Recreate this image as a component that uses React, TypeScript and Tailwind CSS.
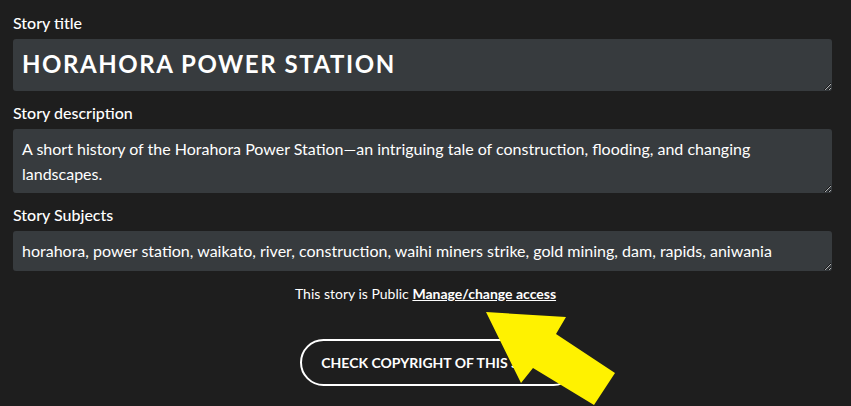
function Field({
  label,
  value,
  className,
}: {
  label: string;
  value: string;
  className: string;
}) {
  return (
    <div className="flex flex-col gap-[4px]">
      <label className="text-white text-[16px] leading-6 font-medium">{label}</label>
      <textarea
        readOnly
        defaultValue={value}
        className={`w-full bg-[#373b3e] text-white rounded-[3px] outline-none ${className}`}
      />
    </div>
  );
}

export default function App() {
  return (
    <div className="relative w-[851px] h-[406px] overflow-hidden bg-[#1e1e1e] font-['Lato',sans-serif]">
      <div className="pl-[13px] pr-[19px] pt-[11px] flex flex-col gap-[10px]">
        <Field
          label="Story title"
          value="HORAHORA POWER STATION"
          className="h-[52px] px-[9px] pt-[9px] text-[24px] leading-8 font-bold tracking-[0.065em]"
        />
        <Field
          label="Story description"
          value="A short history of the Horahora Power Station—an intriguing tale of construction, flooding, and changing landscapes."
          className="h-[64px] px-[9px] pt-[7px] text-[16px] leading-[25px]"
        />
        <Field
          label="Story Subjects"
          value="horahora, power station, waikato, river, construction, waihi miners strike, gold mining, dam, rapids, aniwania"
          className="h-[40px] px-[9px] pt-[7px] text-[16px] leading-[25px]"
        />
      </div>

      <p className="mt-[13px] text-center text-white text-[14px] leading-5">
        This story is Public{" "}
        <a href="#" className="font-bold underline">
          Manage/change access
        </a>
      </p>

      <div className="mt-[35px] flex justify-center pl-[26px]">
        <button className="h-[47px] px-[19px] rounded-full border-2 border-white text-white text-[14px] font-bold">
          CHECK COPYRIGHT OF THIS STORY
        </button>
      </div>

      <svg className="absolute inset-0 pointer-events-none" width="851" height="406" viewBox="0 0 851 406">
        <polygon
          points="486,312 566,317 556,334 615,373 594,405 533,368 521,383"
          fill="#fff200"
        />
      </svg>
    </div>
  );
}
